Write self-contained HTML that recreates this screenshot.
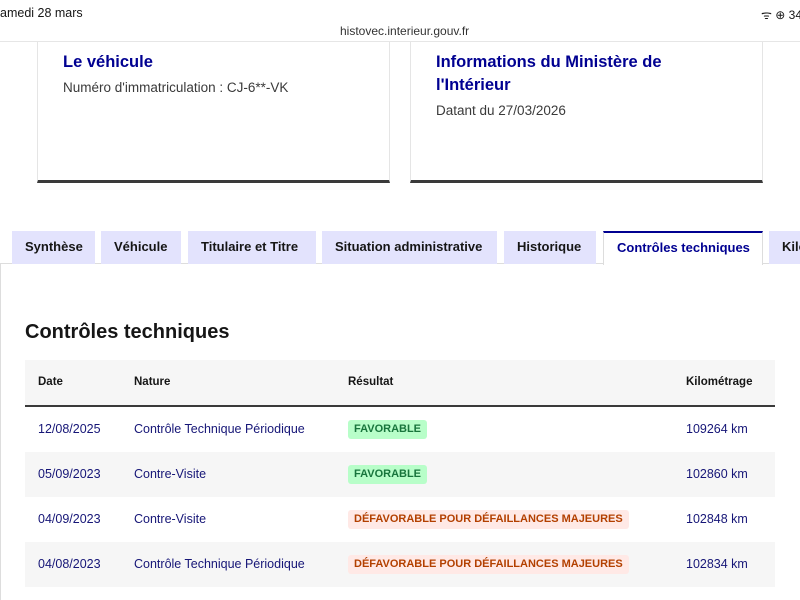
<!DOCTYPE html>
<html><head><meta charset="utf-8"><style>
*{margin:0;padding:0;box-sizing:border-box}
body{width:800px;height:600px;overflow:hidden;background:#fff;font-family:"Liberation Sans",sans-serif;position:relative;color:#161616}
.a{position:absolute;white-space:nowrap}
.card{position:absolute;top:30px;height:153px;border:1px solid #e5e5e5;border-bottom:3px solid #3a3a3a;background:#fff}
.ct{color:#000091;font-weight:bold;font-size:16.5px;line-height:23px}
.cx{color:#3a3a3a;font-size:13.5px}
.tab{position:absolute;top:231px;height:33px;background:#e3e3fd;font-weight:bold;font-size:13px;line-height:32px;padding-left:13px;color:#161616;overflow:hidden}
.tab.on{background:#fff;color:#000091;border-top:2px solid #000091;line-height:30px;height:34px;border-left:1px solid #ddd;border-right:1px solid #ddd}
.row{position:absolute;left:25px;width:750px;height:45px;font-size:12.5px;color:#161677}
.row span{position:absolute;top:15px}
.b{position:absolute;top:13px!important;height:19px;line-height:19px;padding:0 6px;font-weight:bold;font-size:11px;border-radius:3px}
.g{background:#b8fec9;color:#18753c}
.r{background:#ffe9e6;color:#b34000}
</style></head><body>
<div class="a" style="left:0;top:0;width:800px;height:42px;background:#fff;border-bottom:1px solid #e6e6e6;z-index:2"></div>
<div class="a" style="left:0;top:6px;font-size:12.5px;z-index:3">amedi 28 mars</div>
<div class="a" style="left:340px;top:24px;font-size:12px;color:#333;z-index:3">histovec.interieur.gouv.fr</div>
<div class="a" style="left:761px;top:6px;width:39px;overflow:hidden;font-size:12px;z-index:3">ᯤ ⊕ 34</div>
<div class="card" style="left:37px;width:353px"></div>
<div class="card" style="left:410px;width:353px"></div>
<div class="a ct" style="left:63px;top:51px">Le véhicule</div>
<div class="a cx" style="left:63px;top:80px">Numéro d'immatriculation : CJ-6**-VK</div>
<div class="a ct" style="left:436px;top:51px">Informations du Ministère de<br>l'Intérieur</div>
<div class="a cx" style="left:436px;top:103px">Datant du 27/03/2026</div>
<div class="a" style="left:0;top:263px;width:800px;height:337px;border-top:1px solid #ddd;border-left:1px solid #ddd"></div>
<div class="tab" style="left:12px;width:83px">Synthèse</div>
<div class="tab" style="left:101px;width:80px">Véhicule</div>
<div class="tab" style="left:188px;width:128px">Titulaire et Titre</div>
<div class="tab" style="left:322px;width:175px">Situation administrative</div>
<div class="tab" style="left:504px;width:92px">Historique</div>
<div class="tab on" style="left:603px;width:160px">Contrôles techniques</div>
<div class="tab" style="left:769px;width:31px">Kilométrage</div>
<div class="a" style="left:25px;top:321px;font-size:20px;font-weight:bold">Contrôles techniques</div>
<div class="row" style="top:360px;height:47px;background:#f6f6f6;border-bottom:2px solid #3a3a3a;color:#161616;font-weight:bold;font-size:11.5px">
<span style="left:13px;top:16px">Date</span><span style="left:109px;top:16px">Nature</span><span style="left:323px;top:16px">Résultat</span><span style="left:661px;top:16px">Kilométrage</span></div>
<div class="row" style="top:407px"><span style="left:13px">12/08/2025</span><span style="left:109px">Contrôle Technique Périodique</span><span class="b g" style="left:323px">FAVORABLE</span><span style="left:661px">109264 km</span></div>
<div class="row" style="top:452px;background:#f6f6f6"><span style="left:13px">05/09/2023</span><span style="left:109px">Contre-Visite</span><span class="b g" style="left:323px">FAVORABLE</span><span style="left:661px">102860 km</span></div>
<div class="row" style="top:497px"><span style="left:13px">04/09/2023</span><span style="left:109px">Contre-Visite</span><span class="b r" style="left:323px">DÉFAVORABLE POUR DÉFAILLANCES MAJEURES</span><span style="left:661px">102848 km</span></div>
<div class="row" style="top:542px;background:#f6f6f6"><span style="left:13px">04/08/2023</span><span style="left:109px">Contrôle Technique Périodique</span><span class="b r" style="left:323px">DÉFAVORABLE POUR DÉFAILLANCES MAJEURES</span><span style="left:661px">102834 km</span></div>
</body></html>
